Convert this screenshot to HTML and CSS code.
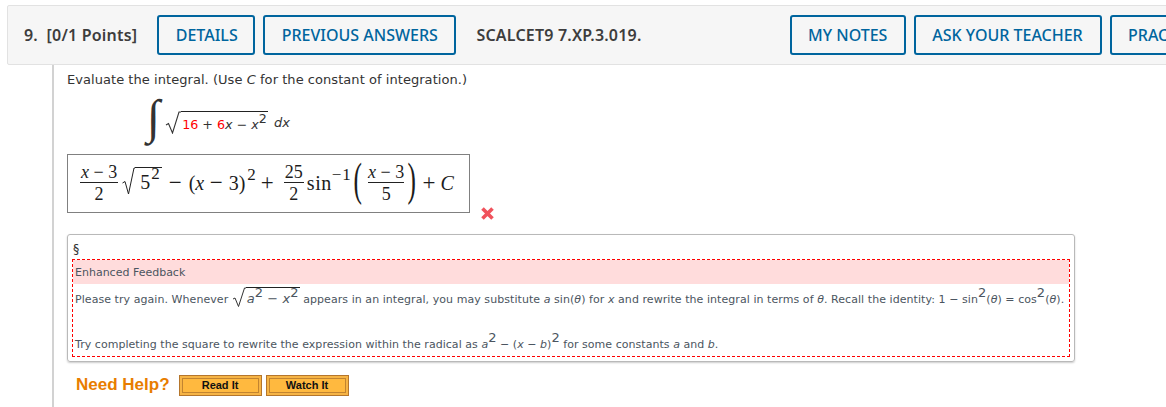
FILE: index.html
```html
<!doctype html>
<html>
<head>
	<meta charset="utf-8">
	<title>Question 9</title>
	<link rel="stylesheet" href="styles.css">
</head>
<body>
	<div class="qhead">
		<span class="qnum">9.</span>
		<span class="qpoints">[0/1 Points]</span>
		<a class="btn btn-details">DETAILS</a>
		<a class="btn">PREVIOUS ANSWERS</a>
		<span class="qcode">SCALCET9 7.XP.3.019.</span>
		<a class="btn btn-notes">MY NOTES</a>
		<a class="btn btn-ask">ASK YOUR TEACHER</a>
		<a class="btn">PRACTICE ANOTHER</a>
	</div>

	<div class="qbody">
		<p class="prompt">Evaluate the integral. (Use <i>C</i> for the constant of integration.)</p>

		<div class="integral">
			<span class="intsign">∫</span>
			<span class="root">
				<svg class="surd" width="16" height="23" viewBox="0 0 16 23"><path d="M1 14 L3.5 12.5 L7.5 22 L14 1 H16" fill="none" stroke="#333" stroke-width="1.1"/></svg>
				<span class="radicand"><span class="red">16</span> + <span class="red">6</span><i>x</i> − <i>x</i><sup>2</sup></span>
			</span>
			<i class="dx">dx</i>
		</div>

		<div class="answer">
			<span class="frac frac-first"><span class="num"><i>x</i> − 3</span><span class="den">2</span></span>
			<span class="root root-math">
				<svg class="surd" width="13" height="28" viewBox="0 0 13 28"><path d="M0.5 16 L3 14.5 L6.5 27 L12 1 H13" fill="none" stroke="#222" stroke-width="1"/></svg>
				<span class="radicand">5<sup>2</sup></span>
			</span>
			<span class="op op-minus">−</span>
			<span class="group">(<i>x</i><span class="op op-in">−</span>3)<sup>2</sup></span>
			<span class="op op-plus">+</span>
			<span class="frac frac-tight"><span class="num">25</span><span class="den">2</span></span>
			<span class="fn">sin<sup>−1</sup></span>
			<span class="paren paren-l">(</span>
			<span class="frac frac-arg"><span class="num"><i>x</i> − 3</span><span class="den">5</span></span>
			<span class="paren paren-r">)</span>
			<span class="op op-c">+</span>
			<i>C</i>
		</div>
		<svg class="wrong" width="15" height="15" viewBox="0 0 15 15"><path d="M2.5 2.5 L12.5 12.5 M12.5 2.5 L2.5 12.5" stroke="#f0525c" stroke-width="3.6"/></svg>

		<div class="panel">
			<div class="section-mark">§</div>
			<div class="feedback">
				<div class="feedback-title">Enhanced Feedback</div>
				<div class="feedback-line">Please try again. Whenever
					<span class="root root-small">
						<svg class="surd" width="14" height="21" viewBox="0 0 14 21"><path d="M1 12 L3 11 L6.5 19.5 L12.5 1 H14" fill="none" stroke="#333" stroke-width="1"/></svg>
						<span class="radicand"><i>a</i><sup>2</sup> − <i>x</i><sup>2</sup></span>
					</span>
					appears in an integral, you may substitute <i>a</i> sin(<i>θ</i>) for <i>x</i> and rewrite the integral in terms of <i>θ</i>. Recall the identity: 1 − sin<sup>2</sup>(<i>θ</i>) = cos<sup>2</sup>(<i>θ</i>).</div>
				<div class="feedback-line feedback-last">Try completing the square to rewrite the expression within the radical as <i>a</i><sup>2</sup> − (<i>x</i> − <i>b</i>)<sup>2</sup> for some constants <i>a</i> and <i>b</i>.</div>
			</div>
		</div>

		<div class="help">
			<span class="help-label">Need Help?</span>
			<a class="helpbtn"><span>Read It</span></a>
			<a class="helpbtn"><span>Watch It</span></a>
		</div>
	</div>
</body>
</html>
```

FILE: styles.css
```css
* {box-sizing:border-box;}
html, body {margin:0; padding:0;}
body {width:1166px; height:407px; overflow:hidden; background:#fff; font-family:"DejaVu Sans",sans-serif; color:#333;}
i {font-style:italic;}
sup {font-size:1em; line-height:0; vertical-align:0.5em;}

.qhead {display:flex; align-items:center; width:1400px; height:60px; margin:5px 0 0 7px; padding-left:16px; background:#f6f6f6; border:1px solid #e2e2e2; border-radius:2px; font-family:"Noto Sans",sans-serif; font-size:16px; font-weight:600; color:#3d3d3d; white-space:nowrap;}
.qnum {margin-right:9px;}
.qpoints {margin-right:20px; letter-spacing:0.2px;}
.qcode {margin:0 148px 0 12px; letter-spacing:0.2px;}
.btn {display:block; flex:none; height:40px; line-height:36px; padding:0 16.5px; margin-right:8px; border:2px solid #00659e; border-radius:3px; color:#00659e; font-weight:500; background:#f6f6f6; text-align:center;}
.btn-details {width:98px;}
.btn-notes {width:116px;}
.btn-ask {width:188px; padding:0;}

.qbody {width:1024px; height:342px; margin-left:52px; padding-left:13px; border-left:2px solid #d2d2d2;}
.prompt {margin:0; padding-top:7px; font-size:13px; line-height:16px; letter-spacing:0.05px;}

.integral {display:flex; align-items:center; height:58px; margin:5px 0 0 80px; font-size:12.7px;}
.intsign {font:48px/48px "Liberation Serif",serif; margin:0 5px 10px 0;}
.root {display:inline-flex; align-items:flex-end;}
.surd {display:block; flex:none;}
.radicand {border-top:1px solid #222; padding:3px 1px 0 1px; line-height:19px; white-space:nowrap;}
.red {color:#f00;}
.dx {margin-left:6px; font-size:13px;}

.answer {display:flex; align-items:center; width:403px; height:59px; margin-top:3px; padding:0 0 1px 12px; border:1px solid #808080; font-family:"Liberation Serif",serif; font-size:20px; color:#1c1c1c; white-space:nowrap;}
.answer sup {font-size:17px; vertical-align:10px;}
.frac {display:inline-flex; flex-direction:column; align-items:center; font-size:18px; line-height:19px;}
.num {border-bottom:1px solid #222; padding:0 1px;}
.den {padding-top:2px;}
.frac-first {margin-right:4px;}
.root-math {margin:-5px 7px 0 0;}
.root-math .radicand {line-height:26px; padding:1px 2px 0 5px;}
.root-math sup {margin-left:1px;}
.op {font-size:23px; line-height:20px;}
.group {margin:0 5px 0 7px;}
.op-in {margin:0 6px 0 5.5px;}
.group sup {margin-left:2px;}
.op-plus {margin:0 10px 0 0;}
.frac-tight {margin-right:3px;}
.fn {letter-spacing:0.5px;}
.fn sup {letter-spacing:1px;}
.paren {font-size:46px; line-height:50px; transform:scaleX(0.55);}
.paren-l {margin:0 3px 6px -2px;}
.paren-r {margin:0 3px 6px 0;}
.frac-arg .num {padding:0;}
.op-c {margin-right:5px;}

.wrong {display:block; margin:-7px 0 0 413px;}

.panel {width:1008px; height:128px; margin-top:13px; padding:4px 4px 0 4px; border:1px solid #b9b9b9; border-radius:3px; box-shadow:0 1px 2px #ccc; font-size:11px; color:#4b5560;}
.section-mark {height:20px; line-height:20px; padding-left:1px; color:#333; font-size:12.5px;}
.feedback {height:98px; border:1px dashed #f00;}
.feedback-title {height:24px; line-height:25px; padding-left:2px; background:#ffdcdc;}
.feedback-line {padding-left:2px; line-height:16px; white-space:nowrap; margin-top:3px; letter-spacing:0.06px;}
.feedback-last {margin-top:29px; letter-spacing:0.04px;}
.feedback-line sup {font-size:13px;}
.root-small {vertical-align:-5px;}
.root-small .radicand {line-height:18px; padding-top:2px; font-size:13px;}

.help {display:flex; align-items:center; height:44px; margin-top:1px; padding-left:9px;}
.help-label {font:bold 17px "Liberation Sans",sans-serif; color:#e87d00; margin-right:9px;}
.helpbtn {display:block; width:83px; height:21px; margin-right:4px; padding:3px; background:#f6b445; border:1px solid #b5762c; text-align:center; font:bold 11px/13px "Liberation Sans",sans-serif; color:#111;}
.helpbtn span {display:block; height:13px; background:#ffb93f; outline:1px solid #c28430;}
```
